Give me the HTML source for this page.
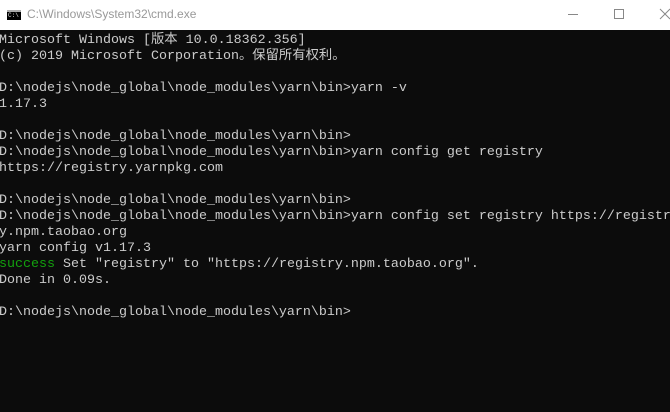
<!DOCTYPE html>
<html><head><meta charset="utf-8"><style>
html,body{margin:0;padding:0;width:670px;height:412px;overflow:hidden;background:#0c0c0c}
.tb{position:absolute;left:0;top:0;width:670px;height:30px;background:#fff}
.tt{position:absolute;left:27px;top:7px;font:12px "Liberation Sans",sans-serif;color:#999}
.ic{position:absolute;left:7px;top:10px;width:14px;height:10px;background:#000;border-top:2px solid #aaa;box-sizing:border-box}
.ic span{position:absolute;left:1px;top:0;font:6px "Liberation Mono",monospace;color:#ddd}
pre{position:absolute;left:-1px;top:33px;margin:0;font:13.33px/16px "Liberation Mono","Noto Sans CJK SC",monospace;color:#cccccc;white-space:pre}
.g{color:#13a10e}
</style></head><body>
<div class="tb"><div class="ic"><span>C:\</span></div><div class="tt">C:\Windows\System32\cmd.exe</div>
<svg style="position:absolute;left:560px;top:8px" width="110" height="16">
<line x1="8" y1="6.5" x2="18" y2="6.5" stroke="#888" stroke-width="1"/>
<rect x="54.5" y="1.5" width="9" height="9" fill="none" stroke="#888"/>
<line x1="100" y1="1" x2="110" y2="11" stroke="#888"/><line x1="110" y1="1" x2="100" y2="11" stroke="#888"/>
</svg></div>
<pre>Microsoft Windows [版本 10.0.18362.356]
(c) 2019 Microsoft Corporation。保留所有权利。

D:\nodejs\node_global\node_modules\yarn\bin&gt;yarn -v
1.17.3

D:\nodejs\node_global\node_modules\yarn\bin&gt;
D:\nodejs\node_global\node_modules\yarn\bin&gt;yarn config get registry
https://registry.yarnpkg.com

D:\nodejs\node_global\node_modules\yarn\bin&gt;
D:\nodejs\node_global\node_modules\yarn\bin&gt;yarn config set registry https://registr
y.npm.taobao.org
yarn config v1.17.3
<span class="g">success</span> Set "registry" to "https://registry.npm.taobao.org".
Done in 0.09s.

D:\nodejs\node_global\node_modules\yarn\bin&gt;</pre>
</body></html>
